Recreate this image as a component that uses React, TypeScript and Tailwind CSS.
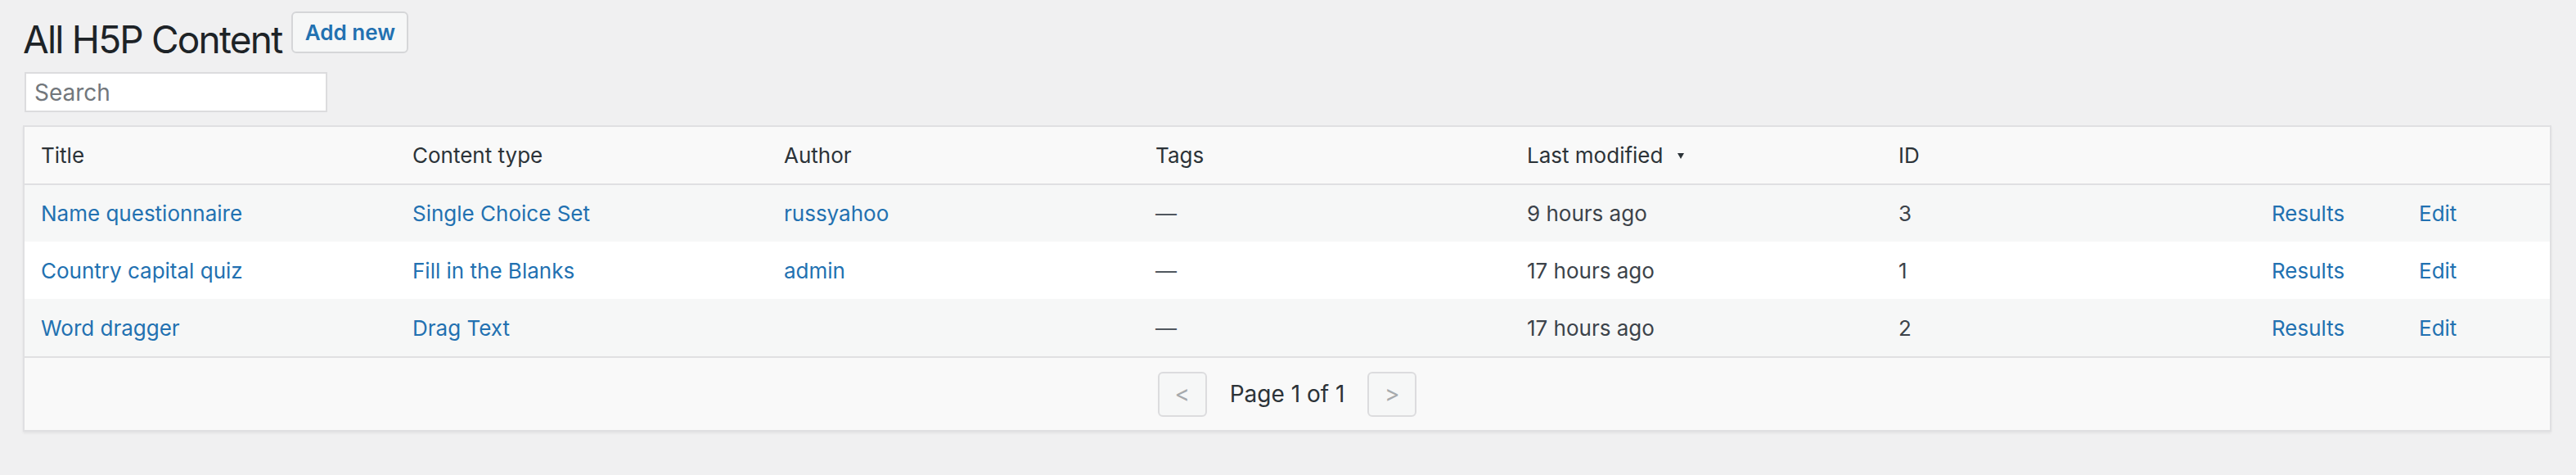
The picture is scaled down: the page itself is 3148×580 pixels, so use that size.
import React from "react";

type Row = {
  title: string;
  type: string;
  author: string;
  tags: string;
  modified: string;
  id: string;
};

const rows: Row[] = [
  { title: "Name questionnaire", type: "Single Choice Set", author: "russyahoo", tags: "—", modified: "9 hours ago", id: "3" },
  { title: "Country capital quiz", type: "Fill in the Blanks", author: "admin", tags: "—", modified: "17 hours ago", id: "1" },
  { title: "Word dragger", type: "Drag Text", author: "", tags: "—", modified: "17 hours ago", id: "2" },
];

const link = "text-[#2271b1]";

export default function App() {
  return (
    <div
      className="min-h-[580px] w-full bg-[#f0f0f1] text-[#3c434a]"
      style={{ fontFamily: "Inter, 'Noto Sans', 'Liberation Sans', sans-serif" }}
    >
      <div className="flex items-start pl-[28px]">
        <h1 className="pt-[18px] text-[46px] leading-[60px] font-normal tracking-[-1.8px] text-[#1d2327]">
          All H5P Content
        </h1>
        <button className="ml-[12px] mt-[14px] flex h-[51px] w-[143px] items-center justify-center rounded-[6px] border-2 border-[#d5d6d8] bg-[#f6f7f7] text-[26px] font-semibold text-[#2271b1]">
          Add new
        </button>
      </div>

      <div className="ml-[30px] mt-[10px] flex h-[49px] w-[370px] items-center border-2 border-[#dcdcde] bg-white pl-[10px]">
        <input
          className="w-full bg-transparent text-[28px] text-[#3c434a] outline-none placeholder:text-[#72777c]"
          placeholder="Search"
        />
      </div>

      <div className="ml-[28px] mr-[30px] mt-[16px] border-2 border-[#e0e0e2] bg-[#f9f9f9] shadow-[0_2px_3px_rgba(0,0,0,0.06)]">
        <table className="w-full table-fixed border-collapse text-[26px]">
          <colgroup>
            <col className="w-[454px]" />
            <col className="w-[454px]" />
            <col className="w-[454px]" />
            <col className="w-[454px]" />
            <col className="w-[454px]" />
            <col className="w-[456px]" />
            <col className="w-[180px]" />
            <col />
          </colgroup>
          <thead>
            <tr className="h-[70px] border-b-2 border-[#e0e0e2] bg-[#f9f9f9] text-left text-[#2c3338]">
              <th className="pl-[20px] font-normal">Title</th>
              <th className="pl-[20px] font-normal">Content type</th>
              <th className="pl-[20px] font-normal">Author</th>
              <th className="pl-[20px] font-normal">Tags</th>
              <th className="pl-[20px] font-normal">
                <span className="inline-flex items-center">
                  Last modified
                  <svg className="ml-[18px] mt-[2px]" width="8" height="7" viewBox="0 0 8 7">
                    <path d="M0 0h8L4 7z" fill="#2c3338" />
                  </svg>
                </span>
              </th>
              <th className="pl-[20px] font-normal">ID</th>
              <th className="pl-[20px] font-normal"></th>
              <th className="pl-[20px] font-normal"></th>
            </tr>
          </thead>
          <tbody>
            {rows.map((r, i) => (
              <tr key={r.id} className={`h-[70px] ${i % 2 === 0 ? "bg-[#f6f7f7]" : "bg-white"}`}>
                <td className={`pl-[20px] ${link}`}>{r.title}</td>
                <td className={`pl-[20px] ${link}`}>{r.type}</td>
                <td className={`pl-[20px] ${link}`}>{r.author}</td>
                <td className="pl-[20px] text-[#50575e]">{r.tags}</td>
                <td className="pl-[20px] text-[#3c434a]">{r.modified}</td>
                <td className="pl-[20px] text-[#3c434a]">{r.id}</td>
                <td className={`pl-[20px] ${link}`}>Results</td>
                <td className={`pl-[20px] ${link}`}>Edit</td>
              </tr>
            ))}
          </tbody>
        </table>
        <div className="flex h-[90px] items-center justify-center border-t-2 border-[#e0e0e2] bg-[#f9f9f9]">
          <button className="flex h-[55px] w-[60px] items-center justify-center rounded-[6px] border-2 border-[#dcdcde] bg-[#f6f7f7] text-[28px] text-[#a7aaad]">
            &lt;
          </button>
          <span className="mx-[28px] text-[28px] text-[#2c3338]">Page 1 of 1</span>
          <button className="flex h-[55px] w-[60px] items-center justify-center rounded-[6px] border-2 border-[#dcdcde] bg-[#f6f7f7] text-[28px] text-[#a7aaad]">
            &gt;
          </button>
        </div>
      </div>
    </div>
  );
}
